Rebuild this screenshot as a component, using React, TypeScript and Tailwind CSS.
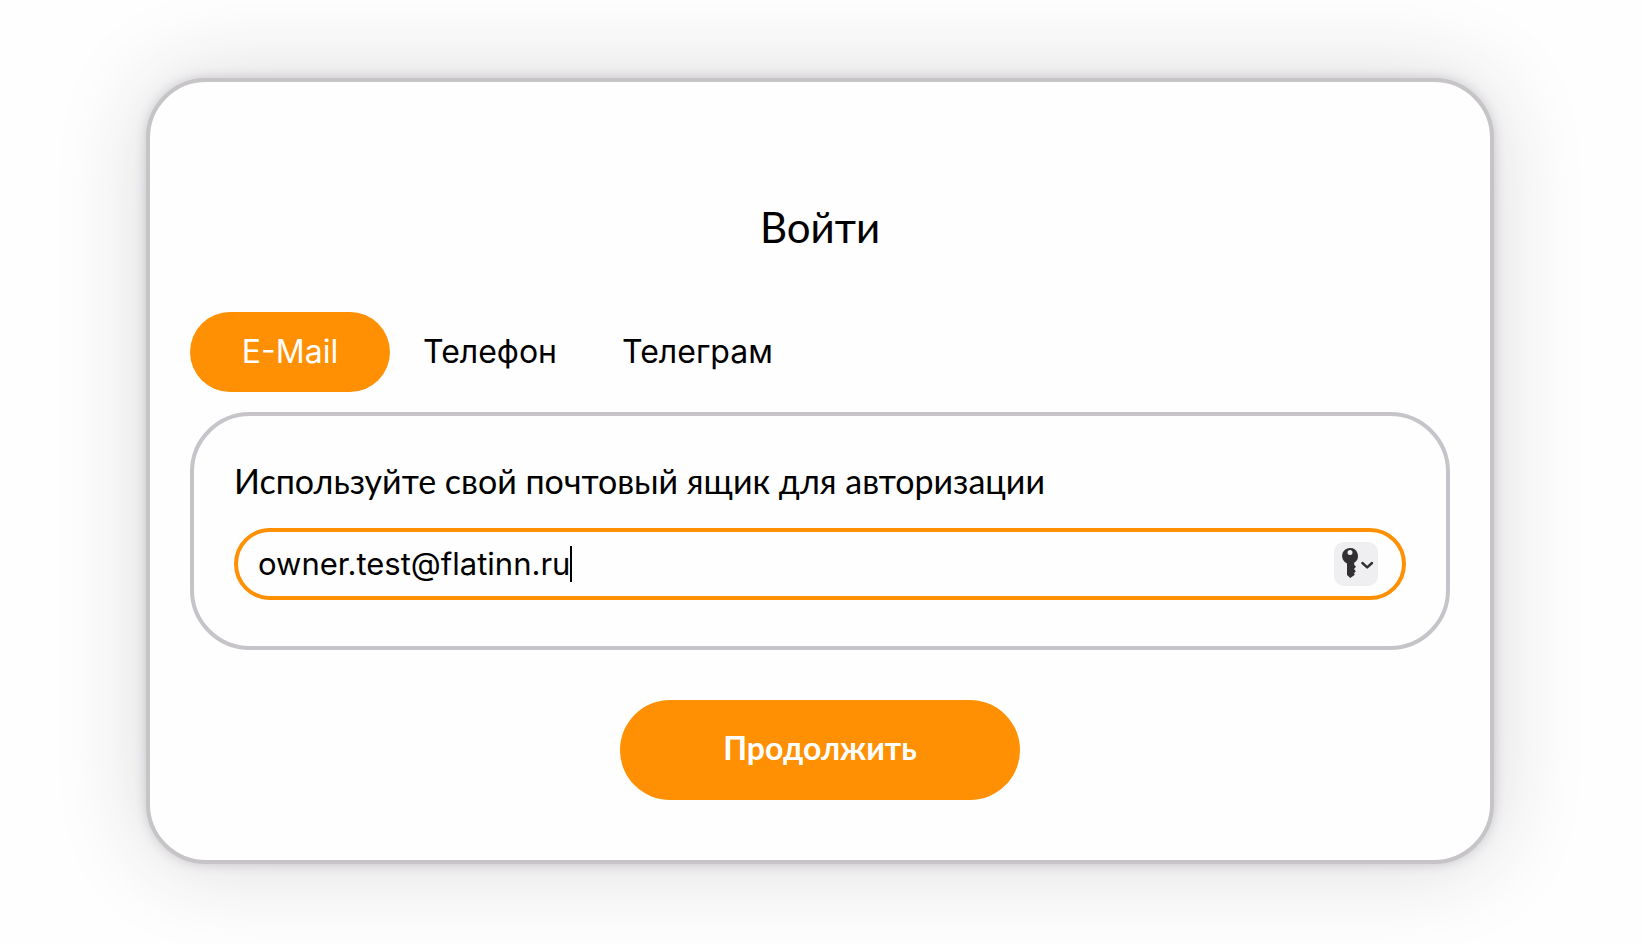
import React, { useState } from "react";

type TabId = "email" | "phone" | "telegram";

const TABS: { id: TabId; label: string }[] = [
  { id: "email", label: "E-Mail" },
  { id: "phone", label: "Телефон" },
  { id: "telegram", label: "Телеграм" },
];

const KeyIcon = () => (
  <svg viewBox="0 0 44 44" className="w-11 h-11" aria-hidden="true">
    <path
      fillRule="evenodd"
      fill="#323032"
      d="M16 6a8 8 0 0 1 4.2 14.8v2l1.8 2-2 2.2 1.8 2.2-1.8 2 .8 1.6L16.3 36 13 33V21.4A8 8 0 0 1 16 6Zm0 2a2.5 2.5 0 1 0 0 5 2.5 2.5 0 0 0 0-5Z"
    />
    <path
      d="M28.4 21 33.2 25.4 38 21"
      fill="none"
      stroke="#323032"
      strokeWidth="2.4"
      strokeLinecap="round"
      strokeLinejoin="round"
    />
  </svg>
);

export default function App() {
  const [tab, setTab] = useState<TabId>("email");
  const [email, setEmail] = useState("owner.test@flatinn.ru");

  return (
    <div className="min-h-screen bg-[#fefefe] pt-[78px] pb-[78px] pl-[146px] pr-[148px] text-black">
      <form
        onSubmit={(e) => e.preventDefault()}
        className="flex flex-col rounded-[60px] border-4 border-[#c6c4c6] bg-[#fefefe] px-10 pt-10 pb-[60px] shadow-[0_0_12px_rgba(50,35,55,0.2),0_0_90px_rgba(50,35,55,0.17)]"
      >
        <h1 className="mt-[70px] mb-[50px] text-center font-['Lato',sans-serif] text-[42px] leading-[70px]">
          Войти
        </h1>

        {/* Login method switch */}
        <div className="mb-5 flex font-['Inter',sans-serif] text-[32px]">
          {TABS.map((t) => (
            <button
              key={t.id}
              type="button"
              onClick={() => setTab(t.id)}
              className={`h-20 min-w-[200px] rounded-full px-8 cursor-pointer ${
                tab === t.id ? "bg-[#ff9003] text-white" : "text-black"
              }`}
            >
              {t.label}
            </button>
          ))}
        </div>

        <div className="rounded-[60px] border-4 border-[#c6c4c8] px-10 pt-10 pb-[46px]">
          <label
            htmlFor="login"
            className="mb-[22px] block font-['Lato',sans-serif] text-[34px] leading-[50px]"
          >
            Используйте свой почтовый ящик для авторизации
          </label>
          <div className="flex h-[72px] items-center rounded-full border-4 border-[#ff9003] pl-5 pr-6">
            <input
              id="login"
              type="text"
              value={email}
              onChange={(e) => setEmail(e.target.value)}
              className="field-sizing-content bg-transparent font-['Inter',sans-serif] text-[31px] leading-10 caret-transparent outline-none"
            />
            <span className="h-9 w-0.5 bg-black" />
            <button
              type="button"
              aria-label="Пароли"
              className="ml-auto rounded-[10px] bg-[#efeef0] cursor-pointer"
            >
              <KeyIcon />
            </button>
          </div>
        </div>

        <button
          type="submit"
          className="mt-[50px] h-[100px] w-[400px] self-center rounded-full bg-[#ff9003] pb-1 font-['Lato',sans-serif] text-[32px] font-bold text-white cursor-pointer"
        >
          Продолжить
        </button>
      </form>
    </div>
  );
}
